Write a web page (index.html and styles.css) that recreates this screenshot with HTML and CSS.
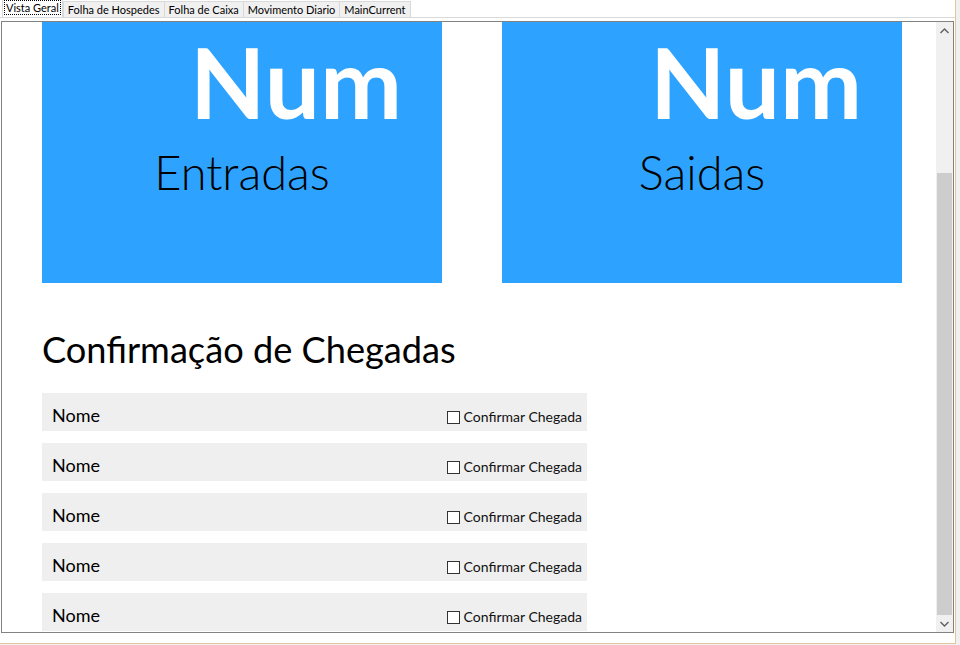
FILE: index.html
```html
<!DOCTYPE html>
<html lang="pt">
  <head>
    <meta charset="UTF-8" />
    <meta name="viewport" content="width=device-width, initial-scale=1.0" />
    <title>Vista Geral</title>
    <link rel="stylesheet" href="styles.css">
  </head>
  <body>
    <div class="window">
      <div class="tabs">
        <div class="tab active"><span>Vista Geral</span></div>
        <div class="tab">Folha de Hospedes</div>
        <div class="tab">Folha de Caixa</div>
        <div class="tab">Movimento Diario</div>
        <div class="tab">MainCurrent</div>
      </div>
      <div class="page">
        <div class="panel">
          <div class="content">
            <div class="cards">
              <div class="card">
                <div class="num">Num</div>
                <div class="label">Entradas</div>
              </div>
              <div class="card">
                <div class="num">Num</div>
                <div class="label">Saidas</div>
              </div>
            </div>

            <h2 class="title">Confirmação de Chegadas</h2>

            <div class="row">
              <span class="name">Nome</span>
              <label class="check"><span class="box"></span>Confirmar Chegada</label>
            </div>
            <div class="row">
              <span class="name">Nome</span>
              <label class="check"><span class="box"></span>Confirmar Chegada</label>
            </div>
            <div class="row">
              <span class="name">Nome</span>
              <label class="check"><span class="box"></span>Confirmar Chegada</label>
            </div>
            <div class="row">
              <span class="name">Nome</span>
              <label class="check"><span class="box"></span>Confirmar Chegada</label>
            </div>
            <div class="row">
              <span class="name">Nome</span>
              <label class="check"><span class="box"></span>Confirmar Chegada</label>
            </div>
          </div>
          <div class="scrollbar">
            <div class="arrow">
              <svg width="9" height="6" viewBox="0 0 9 6"><path d="M0.5 5 L4.5 1 L8.5 5" fill="none" stroke="#606060" stroke-width="1.4"/></svg>
            </div>
            <div class="track"><div class="thumb"></div></div>
            <div class="arrow">
              <svg width="9" height="6" viewBox="0 0 9 6"><path d="M0.5 1 L4.5 5 L8.5 1" fill="none" stroke="#606060" stroke-width="1.4"/></svg>
            </div>
          </div>
        </div>
      </div>
    </div>
  </body>
</html>
```

FILE: styles.css
```css
body {
  margin: 0;
  background-color: #f0f0f0;
  font-family: "Lato", "Noto Sans", sans-serif;
  color: #000;
}

.window {
  width: 955px;
  height: 643px;
  background-color: #f0f0f0;
  border-right: 1px solid #e3c79c;
  border-bottom: 1px solid #e3c79c;
  display: flex;
  flex-direction: column;
}

.tabs {
  height: 17px;
  display: flex;
  align-items: flex-end;
  padding-left: 2px;
  background-color: #fff;
  border-bottom: 1px solid #d9d9d9;
}
.tab {
  height: 15px;
  padding: 0 4px;
  font-size: 11px;
  line-height: 15px;
  background-color: #f0f0f0;
  border: 1px solid #d9d9d9;
  border-bottom: none;
  margin-left: -1px;
  white-space: nowrap;
}
.tab.active {
  height: 17px;
  line-height: 15px;
  background-color: #fff;
  padding: 0 1px;
  margin-left: 0;
  margin-right: 1px;
}
.tab.active span {
  display: inline-block;
  border: 1px dotted #000;
  padding: 0 1px;
  line-height: 13px;
}

.page {
  flex: 1;
  background-color: #fff;
  padding: 3px 0 0 1px;
  height: 615px;
  box-sizing: border-box;
}

.panel {
  width: 951px;
  height: 610px;
  border: 1px solid #828282;
  display: flex;
  background-color: #fff;
}

.content {
  flex: 1;
  overflow: hidden;
  padding-left: 40px;
}

.cards {
  display: flex;
  gap: 60px;
}
.card {
  width: 400px;
  height: 261px;
  background-color: #2da3ff;
  display: flex;
  flex-direction: column;
}
.num {
  color: #fff;
  font-size: 98px;
  font-weight: 700;
  line-height: 118px;
  text-align: right;
  padding-right: 40px;
}
.label {
  font-size: 47px;
  font-weight: 300;
  line-height: 56px;
  text-align: center;
  margin-top: 4px;
}

.title {
  font-weight: normal;
  font-size: 36.2px;
  line-height: 44px;
  margin: 44px 0 22px;
}

.row {
  width: 545px;
  height: 38px;
  box-sizing: border-box;
  background-color: #efefef;
  margin-bottom: 12px;
  display: flex;
  justify-content: space-between;
  align-items: flex-end;
  padding: 0 5px 5px 10px;
}
.name {
  font-size: 18px;
  line-height: 22px;
}
.check {
  display: flex;
  align-items: center;
  gap: 4px;
  font-size: 14px;
  line-height: 18px;
  color: #111;
}
.box {
  width: 11px;
  height: 11px;
  border: 1px solid #333;
  background-color: #fff;
}

.scrollbar {
  width: 17px;
  display: flex;
  flex-direction: column;
  background-color: #f0f0f0;
}
.arrow {
  height: 17px;
  display: flex;
  align-items: center;
  justify-content: center;
}
.track {
  flex: 1;
  display: flex;
  flex-direction: column;
  justify-content: flex-end;
}
.thumb {
  height: 442px;
  margin: 0 1px;
  background-color: #cdcdcd;
}
```
